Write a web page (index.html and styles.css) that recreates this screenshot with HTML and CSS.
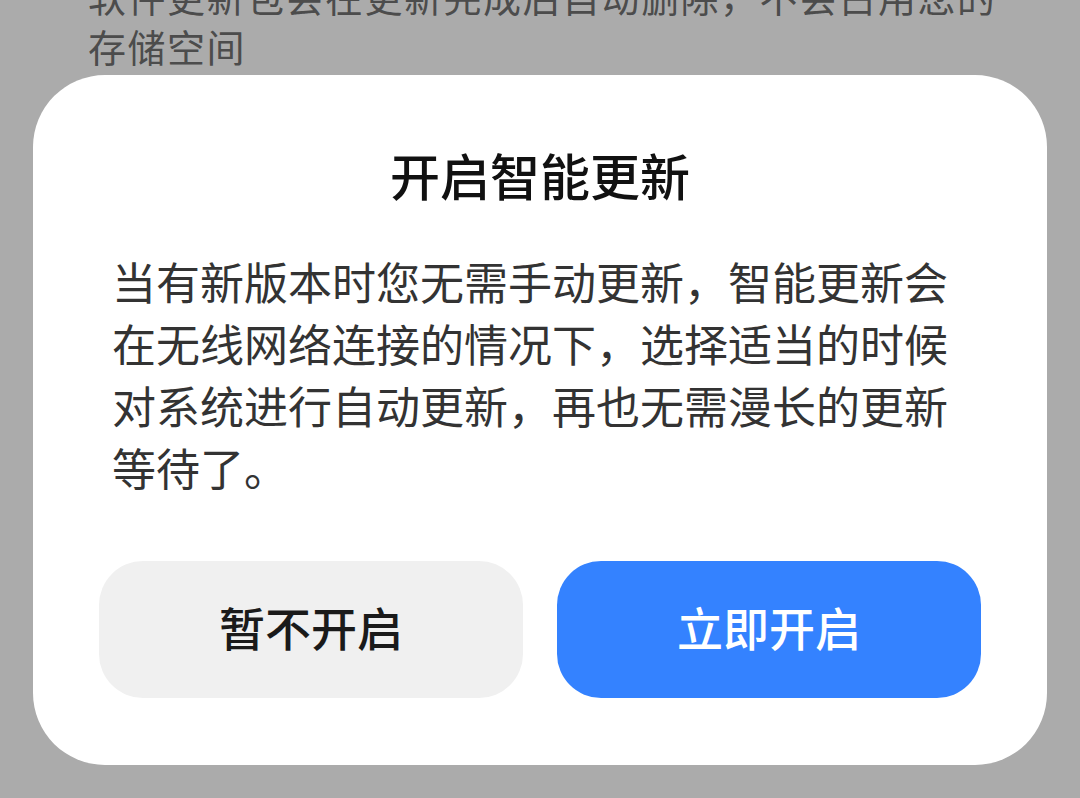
FILE: index.html
```html
<!DOCTYPE html>
<html lang="zh-CN">
<head>
    <meta charset="UTF-8">
    <meta name="viewport" content="width=device-width, initial-scale=1.0">
    <title>开启智能更新</title>
    <link rel="stylesheet" href="styles.css">
</head>
<body>
    <div class="page-text">
        软件更新包会在更新完成后自动删除，不会占用您的<br>存储空间
    </div>
    <div class="dialog">
        <h2 class="dialog-title">开启智能更新</h2>
        <p class="dialog-body">当有新版本时您无需手动更新，智能更新会在无线网络连接的情况下，选择适当的时候对系统进行自动更新，再也无需漫长的更新等待了。</p>
        <div class="dialog-actions">
            <button class="btn btn-cancel">暂不开启</button>
            <button class="btn btn-confirm">立即开启</button>
        </div>
    </div>
</body>
</html>
```

FILE: styles.css
```css
html, body {
    height: 100%;
}
body {
    margin: 0;
    padding: 0;
    background-color: #ababab;
    font-family: "Noto Sans CJK SC", "Noto Sans", sans-serif;
    overflow: hidden;
}
.page-text {
    margin-top: -29px;
    padding: 0 0 0 88px;
    font-size: 38px;
    line-height: 50px;
    letter-spacing: 1.5px;
    color: #4c4c4c;
    white-space: nowrap;
    text-spacing-trim: space-all;
}
.dialog {
    margin: 4px 33px 0;
    padding: 69px 66px 67px;
    background: #fff;
    border-radius: 72px;
}
.dialog-title {
    margin: 0;
    font-size: 50px;
    line-height: 60px;
    font-weight: 500;
    text-align: center;
    color: #111;
}
.dialog-body {
    margin: 46px 0 0;
    padding: 0 13px;
    font-size: 44px;
    line-height: 62px;
    color: #333;
}
.dialog-actions {
    display: flex;
    gap: 34px;
    margin-top: 63px;
}
.btn {
    flex: 1;
    height: 137px;
    border: none;
    border-radius: 44px;
    font-family: inherit;
    font-size: 46px;
    font-weight: 500;
    padding: 0 0 8px;
}
.btn-cancel {
    background: #f0f0f0;
    color: #1a1a1a;
}
.btn-confirm {
    background: #3482ff;
    color: #fff;
}
```
